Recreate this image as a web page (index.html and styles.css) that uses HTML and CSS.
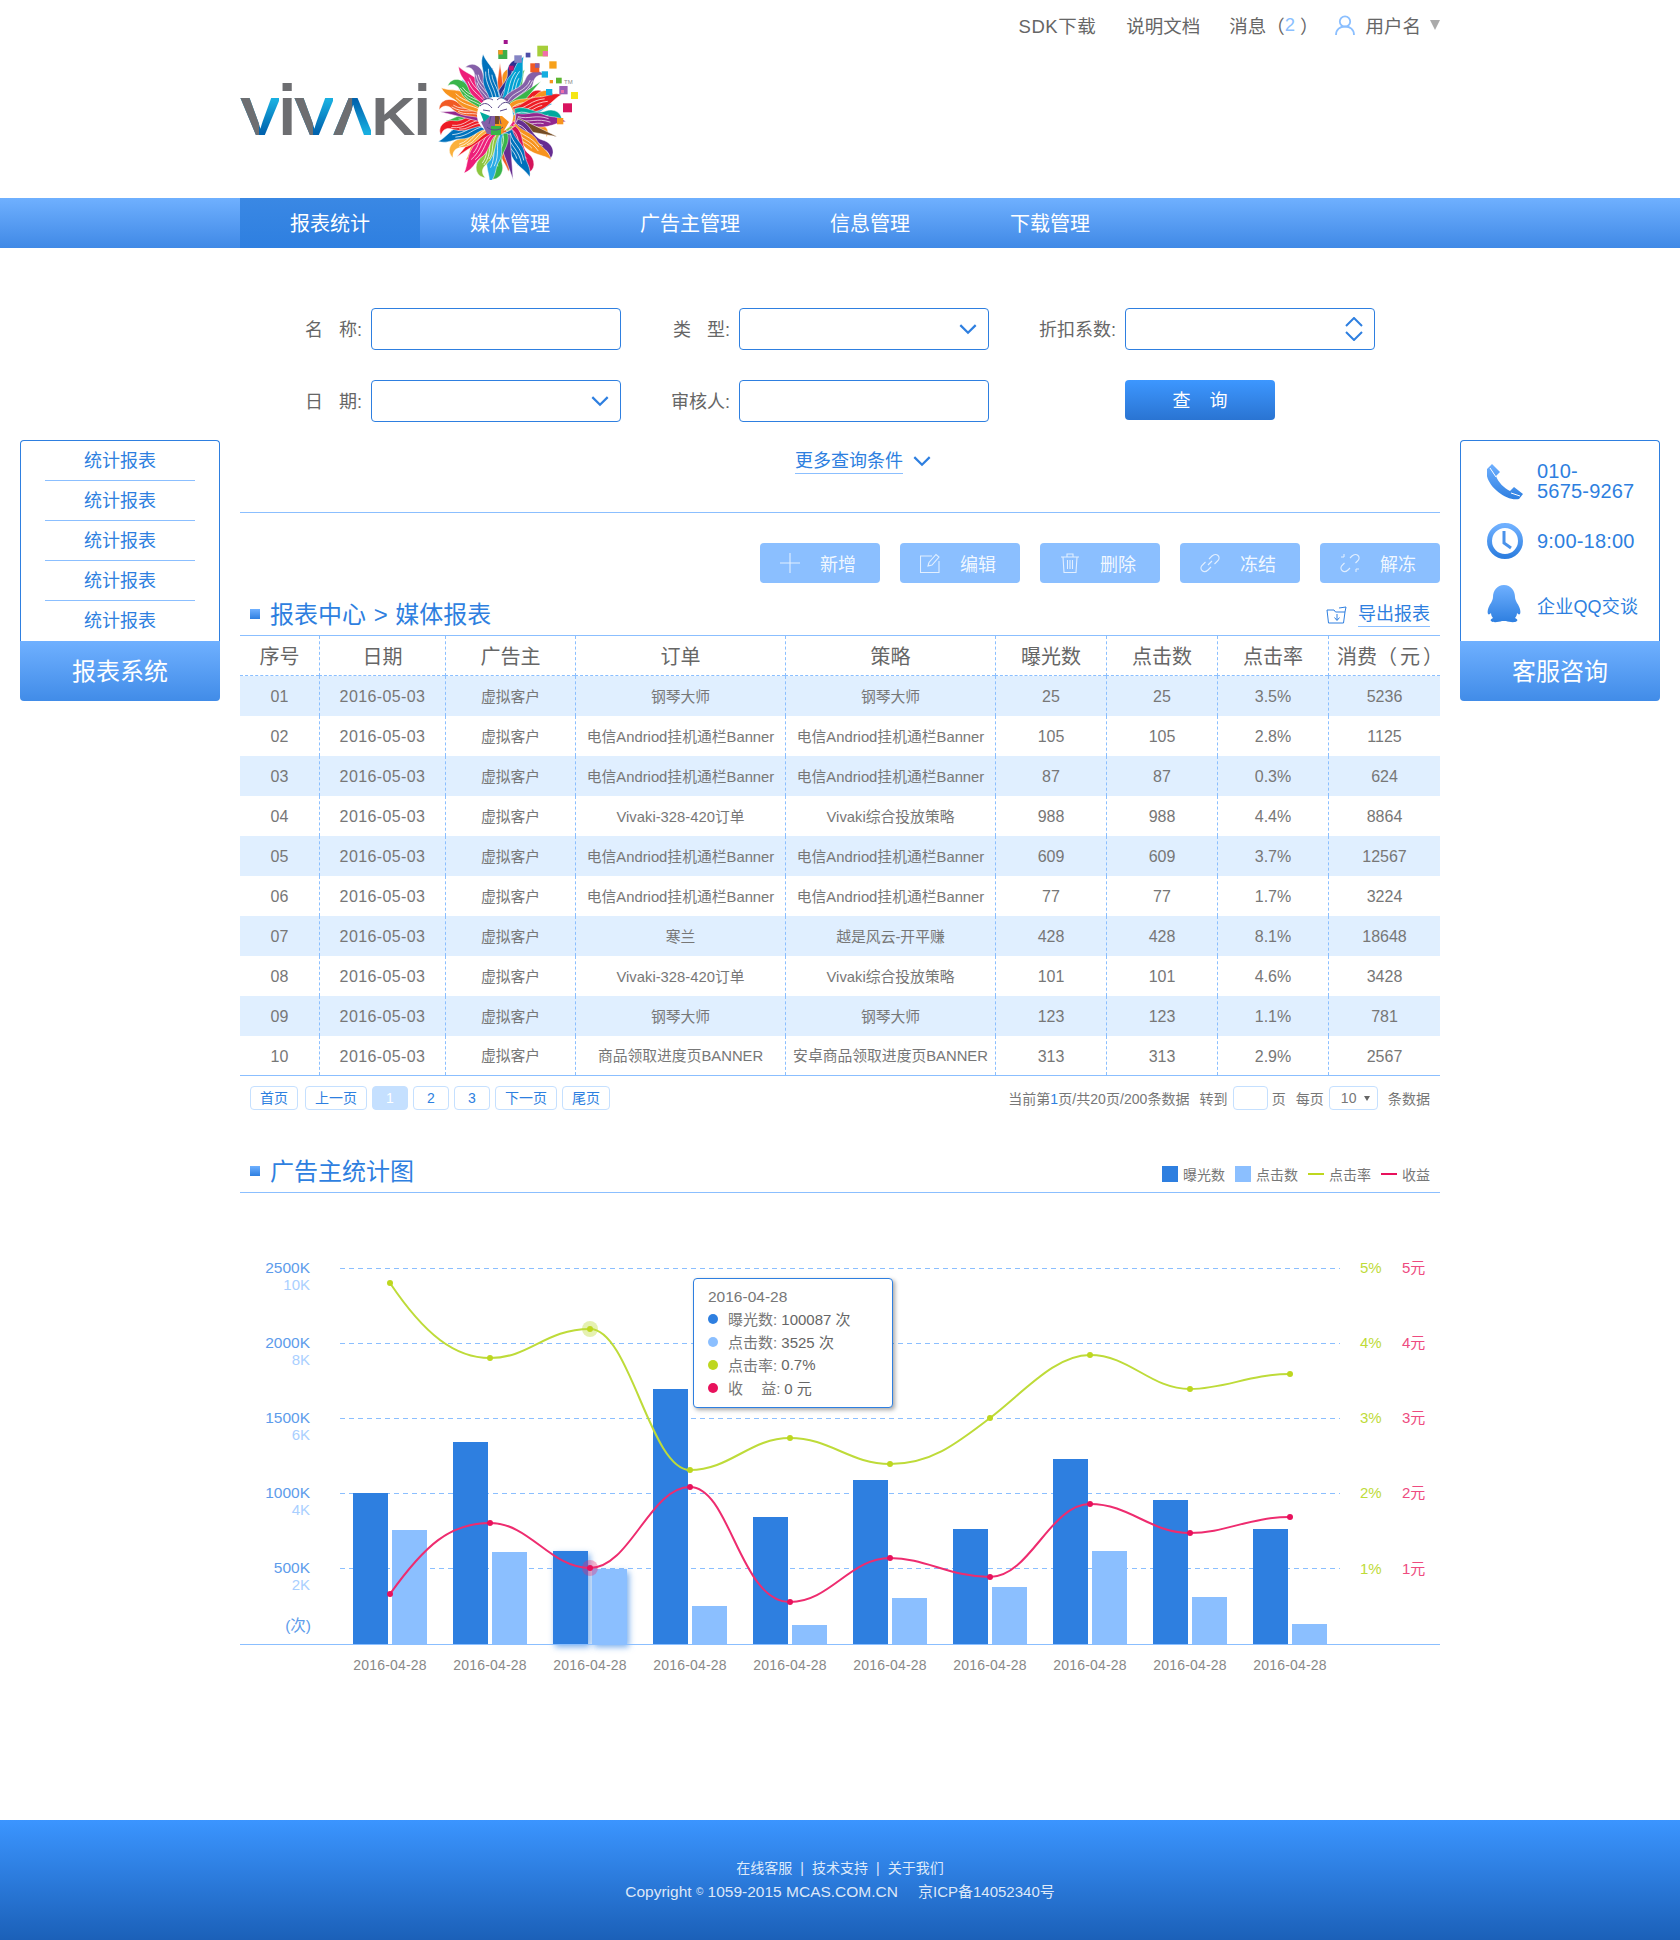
FILE: index.html
```html
<!DOCTYPE html>
<html lang="zh-CN">
<head>
<meta charset="utf-8">
<title>报表系统</title>
<link rel="stylesheet" href="styles.css">
</head>
<body>
<header class="top">
  <div class="logo">
    <div class="wordmark"><span class="lt v">V</span><span class="lt i">I</span><span class="lt v">V</span><span class="lt a">Λ</span><span class="lt">K</span><span class="lt i">I</span></div>
    <svg class="lion" viewBox="436 36 144 144" width="144" height="144">
      <defs>
        <g id="w1"><path d="M-7-14C-10-26 1-32-2-42C-4-49 1-58 10-55C5-53 3-49 6-43C11-31 4-24 6-14Z"/><path class="strand" d="M-3-16C-5-27 5-32 2-44M0-16C-1-26 7-32 4-45M3-16C2-25 8-31 6-38"/></g>
        <g id="w2"><path d="M-6-14C-4-24-11-30-7-40C-5-46-8-52-3-60C-2-54 1-50 3-44C7-32 1-24 6-14Z"/><path class="strand" d="M-3-16C-1-26-7-32-4-44M0-16C2-26-4-34-1-46M3-16C5-26 0-32 1-40"/></g>
        <path id="s1" d="M-5-14L0-50L5-14Z"/>
      </defs>
      <g transform="translate(500 118) scale(1.1)">
        <use href="#w1" fill="#f7931e" transform="rotate(6) scale(.82)"/>
        <use href="#w2" fill="#39b54a" transform="rotate(30) scale(.82)"/>
        <use href="#w1" fill="#ed1c24" transform="rotate(54) scale(.82)"/>
        <use href="#w2" fill="#29abe2" transform="rotate(78) scale(.82)"/>
        <use href="#w1" fill="#f7931e" transform="rotate(102) scale(.82)"/>
        <use href="#w2" fill="#ed1e79" transform="rotate(126) scale(.82)"/>
        <use href="#w1" fill="#8cc63f" transform="rotate(150) scale(.82)"/>
        <use href="#w2" fill="#f15a24" transform="rotate(174) scale(.82)"/>
        <use href="#w1" fill="#662d91" transform="rotate(198) scale(.82)"/>
        <use href="#w2" fill="#f7931e" transform="rotate(222) scale(.82)"/>
        <use href="#w1" fill="#0071bc" transform="rotate(246) scale(.82)"/>
        <use href="#w2" fill="#39b54a" transform="rotate(270) scale(.82)"/>
        <use href="#w1" fill="#ed1c24" transform="rotate(294) scale(.82)"/>
        <use href="#w2" fill="#00a0d2" transform="rotate(318) scale(.82)"/>
        <use href="#w1" fill="#662d91" transform="rotate(342) scale(.82)"/>
        <use href="#s1" fill="#f15a24"/>
        <use href="#w1" fill="#2e3192" transform="rotate(12)"/>
        <use href="#w2" fill="#00a0d2" transform="rotate(24)"/>
        <use href="#w1" fill="#8560a8" transform="rotate(36)"/>
        <use href="#s1" fill="#39b54a" transform="rotate(48)"/>
        <use href="#w1" fill="#f7931e" transform="rotate(60) scale(.95)"/>
        <use href="#w2" fill="#ed1c24" transform="rotate(72)"/>
        <use href="#w1" fill="#00a99d" transform="rotate(84)"/>
        <use href="#w2" fill="#92278f" transform="rotate(96)"/>
        <use href="#s1" fill="#754c24" transform="rotate(108) scale(1.1)"/>
        <use href="#w1" fill="#662d91" transform="rotate(120) scale(1.05)"/>
        <use href="#w2" fill="#f7931e" transform="rotate(132)"/>
        <use href="#w1" fill="#d4145a" transform="rotate(144)"/>
        <use href="#w2" fill="#0071bc" transform="rotate(156)"/>
        <use href="#s1" fill="#662d91" transform="rotate(168) scale(1.15)"/>
        <use href="#w1" fill="#39b54a" transform="rotate(180)"/>
        <use href="#w2" fill="#29abe2" transform="rotate(192)"/>
        <use href="#w1" fill="#8cc63f" transform="rotate(204) scale(-1 1)"/>
        <use href="#w2" fill="#ed1e79" transform="rotate(216)"/>
        <use href="#s1" fill="#ed1c24" transform="rotate(228) scale(1.05)"/>
        <use href="#w1" fill="#fbb03b" transform="rotate(240) scale(-1 1)"/>
        <use href="#w2" fill="#0071bc" transform="rotate(252)"/>
        <use href="#w1" fill="#ed1c24" transform="rotate(264) scale(-1 1)"/>
        <use href="#s1" fill="#92278f" transform="rotate(276) scale(1.1)"/>
        <use href="#w1" fill="#f15a24" transform="rotate(288) scale(-1 1)"/>
        <use href="#w2" fill="#f7931e" transform="rotate(300)"/>
        <use href="#w1" fill="#39b54a" transform="rotate(312) scale(-1 1)"/>
        <use href="#w2" fill="#ed1e79" transform="rotate(324)"/>
        <use href="#w1" fill="#8560a8" transform="rotate(336) scale(-1 1)"/>
        <use href="#w2" fill="#0071bc" transform="rotate(348)"/>
      </g>
      <circle cx="495" cy="115" r="18" fill="#fff"/>
      <path d="M481 122L490 116H495V134H487Z" fill="#8560a8"/>
      <path d="M495 116H502L509 122L502 134H495Z" fill="#f7931e"/>
      <path d="M480 112L490 116L484 122Z" fill="#00a99d"/>
      <path d="M491 126H501V135H491Z" fill="#39b54a"/>
      <path d="M495 116H499V124H495Z" fill="#754c24"/>
      <path class="face" d="M480 106C484 102 488 103 492 108M510 104C506 101 502 102 498 108M483 110L490 111M500 111L507 109M491 116L489 124M499 116L501 124M487 127C491 131 499 131 503 127M482 101C486 98 490 98 493 100M508 100C504 97 500 97 497 100"/>
      <rect x="503.7" y="40" width="4" height="4" fill="#a0148e"/>
      <rect x="498.3" y="50" width="9" height="9" fill="#3fae49"/><rect x="498.3" y="50" width="4.500" height="4.500" fill="#f7931e"/>
      <rect x="514.3" y="55.300" width="7.500" height="7.500" fill="#8585c4"/>
      <rect x="525.7" y="52.700" width="4.700" height="4.700" fill="#4d4da8"/>
      <rect x="537.3" y="45.700" width="10.700" height="10.700" fill="#a6ce39"/><rect x="542.700" y="51" width="5.300" height="5.300" fill="#f06eaa"/>
      <rect x="530.3" y="63.300" width="9" height="9" fill="#f15a24"/><rect x="535" y="63.300" width="4.500" height="4.500" fill="#8560a8"/>
      <rect x="549.3" y="61.300" width="7.300" height="7.300" fill="#f7a11a"/>
      <rect x="541.7" y="71.300" width="6.300" height="6.300" fill="#14aee0"/>
      <rect x="509" y="65.700" width="4.700" height="4.700" fill="#c4136d"/>
      <rect x="549.7" y="80" width="3.300" height="3.300" fill="#f7931e"/>
      <rect x="556" y="77.700" width="5.700" height="5.700" fill="#5cb531"/>
      <text class="tm" x="564" y="83.500">TM</text>
      <rect x="546" y="89" width="6.300" height="6.300" fill="#14aee0"/>
      <rect x="559.3" y="86" width="8.300" height="8.300" fill="#9b5fb5"/><rect x="561" y="90" width="3" height="3" fill="#f06eaa"/>
      <rect x="571" y="92" width="7" height="7" fill="#f5e615"/>
      <rect x="563" y="103.300" width="9" height="9" fill="#d9145f"/>
      <rect x="557" y="118" width="6.300" height="6.300" fill="#f7941e"/>
    </svg>
  </div>
  <nav class="links">
    <a class="sdk">SDK下载</a>
    <a>说明文档</a>
    <a class="msg">消息（<b>2</b>）</a>
    <a class="user">
      <svg viewBox="0 0 20 20" width="20" height="20"><circle cx="10" cy="6.500" r="5.200"/><path d="M1 20C1 14.500 5 11.500 10 11.500S19 14.500 19 20"/></svg>
      用户名<i class="caret"></i>
    </a>
  </nav>
</header>

<nav class="mainnav">
  <div class="mainnav-in">
    <a class="active">报表统计</a><a>媒体管理</a><a>广告主管理</a><a>信息管理</a><a>下载管理</a>
  </div>
</nav>

<div class="layout">
  <aside class="side side-l">
    <div class="panel-body">
      <ul class="menu">
        <li>统计报表</li><li>统计报表</li><li>统计报表</li><li>统计报表</li><li>统计报表</li>
      </ul>
    </div>
    <div class="panel-head">报表系统</div>
  </aside>

  <main class="main">
    <form class="query">
      <label>名 称:</label><div class="field"></div>
      <label>类 型:</label><div class="field"><svg class="chev" viewBox="0 0 16 10" width="18" height="11"><path d="M1 1L8 8L15 1"/></svg></div>
      <label>折扣系数:</label><div class="field"><svg class="updown" viewBox="0 0 18 24" width="18" height="24"><path d="M1 9L9 1L17 9M1 15L9 23L17 15"/></svg></div>
      <label>日 期:</label><div class="field"><svg class="chev" viewBox="0 0 16 10" width="18" height="11"><path d="M1 1L8 8L15 1"/></svg></div>
      <label>审核人:</label><div class="field"></div>
      <span></span><button type="button" class="search">查 询</button>
    </form>
    <div class="more"><a>更多查询条件</a><svg class="chev" viewBox="0 0 16 10" width="18" height="11"><path d="M1 1L8 8L15 1"/></svg></div>
    <div class="rule"></div>

    <div class="tools">
      <button type="button"><svg viewBox="0 0 20 20" width="20" height="20"><path d="M10 0V20M0 10H20"/></svg>新增</button>
      <button type="button"><svg viewBox="0 0 20 20" width="20" height="20"><path d="M12 3H.5V19.500H19V8M8 13L9 9.500L16 1.500L19 4L12 12Z"/></svg>编辑</button>
      <button type="button"><svg viewBox="0 0 20 20" width="20" height="20"><path d="M1 4H19M7 4V1H13V4M3 4L4 19.500H16L17 4M7.500 7V16M10 7V16M12.500 7V16"/></svg>删除</button>
      <button type="button"><svg viewBox="0 0 20 20" width="20" height="20"><path d="M8 12L12 8M9 6L12 3C14 1 16.500 1 18 2.500S19.500 6.500 17.500 8L14.500 11M11 14L8 17C6 19 3.500 19 2 17.500S.5 13.500 2.500 12L5.500 9"/></svg>冻结</button>
      <button type="button"><svg viewBox="0 0 20 20" width="20" height="20"><path d="M10 5L12 3C14 1 16.500 1 18 2.500S19.500 6.500 17.500 8L15.500 10M10 15L8 17C6 19 3.500 19 2 17.500S.5 13.500 2.500 12L4.500 10M4 1V4M1 4H4M16 16V19M16 16H19"/></svg>解冻</button>
    </div>

    <div class="sec-head report-head">
      <i class="sq"></i><h2>报表中心 &gt; 媒体报表</h2>
      <a class="export"><svg viewBox="0 0 22 18" width="22" height="18"><path d="M1 4H8L9.500 6H19L17.500 17H2.500ZM13 2L20 1L19 6M11 8V14M8.500 11.500L11 14.500L13.500 11.500"/></svg><span>导出报表</span></a>
    </div>

    <table class="grid">
      <colgroup><col class="c1"><col class="c2"><col class="c3"><col class="c4"><col class="c4"><col class="c5"><col class="c5"><col class="c5"><col class="c6"></colgroup>
      <thead><tr><th>序号</th><th>日期</th><th>广告主</th><th>订单</th><th>策略</th><th>曝光数</th><th>点击数</th><th>点击率</th><th>消费（ 元 ）</th></tr></thead>
      <tbody>
        <tr><td class="n">01</td><td class="n">2016-05-03</td><td>虚拟客户</td><td>钢琴大师</td><td>钢琴大师</td><td class="n">25</td><td class="n">25</td><td class="n">3.5%</td><td class="n">5236</td></tr>
        <tr><td class="n">02</td><td class="n">2016-05-03</td><td>虚拟客户</td><td>电信Andriod挂机通栏Banner</td><td>电信Andriod挂机通栏Banner</td><td class="n">105</td><td class="n">105</td><td class="n">2.8%</td><td class="n">1125</td></tr>
        <tr><td class="n">03</td><td class="n">2016-05-03</td><td>虚拟客户</td><td>电信Andriod挂机通栏Banner</td><td>电信Andriod挂机通栏Banner</td><td class="n">87</td><td class="n">87</td><td class="n">0.3%</td><td class="n">624</td></tr>
        <tr><td class="n">04</td><td class="n">2016-05-03</td><td>虚拟客户</td><td>Vivaki-328-420订单</td><td>Vivaki综合投放策略</td><td class="n">988</td><td class="n">988</td><td class="n">4.4%</td><td class="n">8864</td></tr>
        <tr><td class="n">05</td><td class="n">2016-05-03</td><td>虚拟客户</td><td>电信Andriod挂机通栏Banner</td><td>电信Andriod挂机通栏Banner</td><td class="n">609</td><td class="n">609</td><td class="n">3.7%</td><td class="n">12567</td></tr>
        <tr><td class="n">06</td><td class="n">2016-05-03</td><td>虚拟客户</td><td>电信Andriod挂机通栏Banner</td><td>电信Andriod挂机通栏Banner</td><td class="n">77</td><td class="n">77</td><td class="n">1.7%</td><td class="n">3224</td></tr>
        <tr><td class="n">07</td><td class="n">2016-05-03</td><td>虚拟客户</td><td>寒兰</td><td>越是风云-开平赚</td><td class="n">428</td><td class="n">428</td><td class="n">8.1%</td><td class="n">18648</td></tr>
        <tr><td class="n">08</td><td class="n">2016-05-03</td><td>虚拟客户</td><td>Vivaki-328-420订单</td><td>Vivaki综合投放策略</td><td class="n">101</td><td class="n">101</td><td class="n">4.6%</td><td class="n">3428</td></tr>
        <tr><td class="n">09</td><td class="n">2016-05-03</td><td>虚拟客户</td><td>钢琴大师</td><td>钢琴大师</td><td class="n">123</td><td class="n">123</td><td class="n">1.1%</td><td class="n">781</td></tr>
        <tr><td class="n">10</td><td class="n">2016-05-03</td><td>虚拟客户</td><td>商品领取进度页BANNER</td><td>安卓商品领取进度页BANNER</td><td class="n">313</td><td class="n">313</td><td class="n">2.9%</td><td class="n">2567</td></tr>
      </tbody>
    </table>

    <div class="pager">
      <div class="pages">
        <a>首页</a><a>上一页</a><a class="p on">1</a><a class="p">2</a><a class="p">3</a><a>下一页</a><a>尾页</a>
      </div>
      <div class="pinfo">
        <span>当前第<em>1</em>页/共20页/200条数据</span>
        <span class="to">转到</span><span class="box jump"></span><span class="s4">页</span>
        <span class="to2">每页</span><span class="box size">10<i></i></span><span class="to2">条数据</span>
      </div>
    </div>

    <div class="sec-head chart-head">
      <i class="sq"></i><h2>广告主统计图</h2>
      <div class="legend">
        <i class="lg-sq dark"></i><span>曝光数</span>
        <i class="lg-sq light"></i><span>点击数</span>
        <i class="lg-ln green"></i><span>点击率</span>
        <i class="lg-ln pink"></i><span>收益</span>
      </div>
    </div>

    <div class="chart">
      <svg class="plot" viewBox="240 1193 1200 627" width="1200" height="627">
        <g class="gridl">
          <path d="M340 1268.500H1340M340 1343.500H1340M340 1418.500H1340M340 1493.500H1340M340 1568.500H1340"/>
        </g>
        <g class="b-d">
          <rect x="353" y="1493" width="35" height="151"/>
          <rect x="453" y="1442" width="35" height="202"/>
          <rect x="653" y="1389" width="35" height="255"/>
          <rect x="753" y="1517" width="35" height="127"/>
          <rect x="853" y="1480" width="35" height="164"/>
          <rect x="953" y="1529" width="35" height="115"/>
          <rect x="1053" y="1459" width="35" height="185"/>
          <rect x="1153" y="1500" width="35" height="144"/>
          <rect x="1253" y="1529" width="35" height="115"/>
        </g>
        <g class="b-l">
          <rect x="392" y="1530" width="35" height="114"/>
          <rect x="492" y="1552" width="35" height="92"/>
          <rect x="692" y="1606" width="35" height="38"/>
          <rect x="792" y="1625" width="35" height="19"/>
          <rect x="892" y="1598" width="35" height="46"/>
          <rect x="992" y="1587" width="35" height="57"/>
          <rect x="1092" y="1551" width="35" height="93"/>
          <rect x="1192" y="1597" width="35" height="47"/>
          <rect x="1292" y="1624" width="35" height="20"/>
        </g>
        <g class="hover">
          <rect class="hd" x="553" y="1551" width="35" height="93"/>
          <rect class="hl" x="592" y="1569" width="35" height="75"/>
        </g>
        <path class="axis" d="M240 1644.500H1440"/>
        <path class="ln-g" d="M390 1283C425 1335 455 1358 490 1358C530 1358 545 1329 590 1329C630 1329 650 1470 690 1470C730 1470 750 1438 790 1438C830 1438 850 1464 890 1464C930 1464 955 1445 990 1418C1025 1391 1055 1355 1090 1355C1130 1355 1150 1389 1190 1389C1225 1389 1250 1374 1290 1374"/>
        <path class="ln-p" d="M390 1594C425 1545 450 1523 490 1523C530 1523 550 1568 590 1568C630 1568 650 1487 690 1487C730 1487 740 1602 790 1602C830 1602 850 1558 890 1558C925 1558 950 1577 990 1577C1030 1577 1050 1504 1090 1504C1130 1504 1150 1533 1190 1533C1225 1533 1250 1517 1290 1517"/>
        <circle class="halo-g" cx="590" cy="1329" r="8"/>
        <circle class="halo-p" cx="590" cy="1568" r="8"/>
        <g class="dots-g">
          <circle cx="390" cy="1283" r="3"/><circle cx="490" cy="1358" r="3"/><circle cx="590" cy="1329" r="3"/><circle cx="690" cy="1470" r="3"/><circle cx="790" cy="1438" r="3"/><circle cx="890" cy="1464" r="3"/><circle cx="990" cy="1418" r="3"/><circle cx="1090" cy="1355" r="3"/><circle cx="1190" cy="1389" r="3"/><circle cx="1290" cy="1374" r="3"/>
        </g>
        <g class="dots-p">
          <circle cx="390" cy="1594" r="3"/><circle cx="490" cy="1523" r="3"/><circle cx="590" cy="1568" r="3"/><circle cx="690" cy="1487" r="3"/><circle cx="790" cy="1602" r="3"/><circle cx="890" cy="1558" r="3"/><circle cx="990" cy="1577" r="3"/><circle cx="1090" cy="1504" r="3"/><circle cx="1190" cy="1533" r="3"/><circle cx="1290" cy="1517" r="3"/>
        </g>
        <g class="ya">
          <text x="310" y="1273">2500K</text><text x="310" y="1348">2000K</text><text x="310" y="1423">1500K</text><text x="310" y="1498">1000K</text><text x="310" y="1573">500K</text>
          <text x="311" y="1631">(次)</text>
        </g>
        <g class="yb">
          <text x="310" y="1290">10K</text><text x="310" y="1365">8K</text><text x="310" y="1440">6K</text><text x="310" y="1515">4K</text><text x="310" y="1590">2K</text>
        </g>
        <g class="yc">
          <text x="1360" y="1273">5%</text><text x="1360" y="1348">4%</text><text x="1360" y="1423">3%</text><text x="1360" y="1498">2%</text><text x="1360" y="1574">1%</text>
        </g>
        <g class="yd">
          <text x="1402" y="1273">5元</text><text x="1402" y="1348">4元</text><text x="1402" y="1423">3元</text><text x="1402" y="1498">2元</text><text x="1402" y="1574">1元</text>
        </g>
        <g class="xa">
          <text x="390" y="1670">2016-04-28</text><text x="490" y="1670">2016-04-28</text><text x="590" y="1670">2016-04-28</text><text x="690" y="1670">2016-04-28</text><text x="790" y="1670">2016-04-28</text><text x="890" y="1670">2016-04-28</text><text x="990" y="1670">2016-04-28</text><text x="1090" y="1670">2016-04-28</text><text x="1190" y="1670">2016-04-28</text><text x="1290" y="1670">2016-04-28</text>
        </g>
      </svg>
      <div class="tip">
        <div class="tip-date">2016-04-28</div>
        <div class="tip-row"><i class="d1"></i>曝光数: <b>100087 次</b></div>
        <div class="tip-row"><i class="d2"></i>点击数: <b>3525 次</b></div>
        <div class="tip-row"><i class="d3"></i>点击率: <b>0.7%</b></div>
        <div class="tip-row"><i class="d4"></i><span class="sp">收 益:</span><b>0 元</b></div>
      </div>
    </div>
  </main>

  <aside class="side side-r">
    <div class="panel-body contact">
      <div class="c-row r1">
        <svg viewBox="0 0 36 37" width="36" height="37">
          <defs><linearGradient id="blueG" x1="0" y1="0" x2="0" y2="1"><stop offset="0" stop-color="#6fb0ff"/><stop offset="1" stop-color="#2e7fe0"/></linearGradient></defs>
          <path class="grad" d="M5 1L13 9L9 13C11 19 17 25 23 28L27 24L36 31L32 36C18 39-4 20 0 6Z"/>
          <path class="cut" d="M3 5L9 14M24 30L33 33"/>
        </svg>
        <span>010-<br>5675-9267</span>
      </div>
      <div class="c-row r2">
        <svg viewBox="0 0 36 36" width="36" height="36"><circle class="ring" cx="18" cy="18" r="15.500"/><path class="hand" d="M17 8V20L24 25"/></svg>
        <span>9:00-18:00</span>
      </div>
      <div class="c-row r3">
        <svg viewBox="0 0 34 38" width="34" height="38"><path class="grad" d="M17 0C24 0 28 6 28 12C28 14 29 16 30 18C33 22 34 27 33 29C32 30 31 29 30 28C30 30 29 32 28 33C30 34 31 35 30 36C28 38 22 37 19 36H15C12 37 6 38 4 36C3 35 4 34 6 33C5 32 4 30 4 28C3 29 2 30 1 29C0 27 1 22 4 18C5 16 6 14 6 12C6 6 10 0 17 0Z"/></svg>
        <a>企业QQ交谈</a>
      </div>
    </div>
    <div class="panel-head">客服咨询</div>
  </aside>
</div>

<footer class="foot">
  <div class="foot-links">在线客服<i>|</i>技术支持<i>|</i>关于我们</div>
  <div class="foot-copy"><span>Copyright <small>©</small> 1059-2015 MCAS.COM.CN</span><span class="icp">京ICP备14052340号</span></div>
</footer>
</body>
</html>
```

FILE: styles.css
```css
* { box-sizing: border-box; }
html, body { margin: 0; padding: 0; }
body {
  width: 1680px;
  background: #fff;
  color: #666;
  font-family: "Liberation Sans", "Noto Sans CJK SC", sans-serif;
}
a { text-decoration: none; }
ul { list-style: none; margin: 0; padding: 0; }
h2 { margin: 0; font-weight: 400; }

/* header */
.top { display: flex; justify-content: space-between; align-items: flex-start; width: 1200px; height: 198px; margin: 0 auto; }
.logo { display: flex; align-items: flex-start; margin-top: 36px; }
.wordmark { margin-top: 54px; width: 196px; height: 53px; font: 700 53px/53px "Liberation Sans", sans-serif; color: #6d6e71; letter-spacing: -1.600px; transform: scaleX(1.15); transform-origin: left top; white-space: nowrap; }
.lt { display: inline-block; position: relative; }
.lt.i::before { content: ""; position: absolute; left: 3.500px; top: -7px; width: 7.500px; height: 8px; background: #6d6e71; }
.lt.v, .lt.a { color: transparent; -webkit-background-clip: text; background-clip: text; }
.lt.v { background-image: linear-gradient(90deg, #6d6e71 48%, transparent 48%), linear-gradient(180deg, #18aee0 20%, #0063ae 80%); }
.lt.a { background-image: linear-gradient(90deg, #6d6e71 50%, transparent 50%), linear-gradient(180deg, #0063ae 20%, #18aee0 80%); }
.lion { display: block; flex: none; }
.strand { fill: none; stroke: #fff; stroke-width: .6; }
.lion use { stroke: #fff; stroke-width: .4; }
.face { fill: none; stroke: #5b4a8a; stroke-width: 1; }
.tm { font-size: 6px; fill: #888; }
.links { display: flex; align-items: center; gap: 30px; height: 49px; font-size: 18.500px; color: #666; }
.links a { display: flex; align-items: center; white-space: nowrap; }
.sdk { letter-spacing: .5px; }
.msg b { font-weight: 400; color: #8bbfff; margin: 0 5px 0 0; }
.msg { margin-left: -1px; margin-right: -13px; }
.user svg { margin-right: 10px; fill: none; stroke: #8bbfff; stroke-width: 1.800; }
.caret { width: 0; height: 0; margin: 1px 0 0 9px; border: 5.500px solid transparent; border-top: 10px solid #aaa; border-bottom: 0; }

/* main nav */
.mainnav { height: 50px; background: linear-gradient(#6fb0ff, #4089e6); }
.mainnav-in { display: flex; width: 1200px; margin: 0 auto; }
.mainnav-in a { width: 180px; height: 50px; line-height: 52px; text-align: center; color: #fff; font-size: 20px; }
.mainnav-in a.active { background: linear-gradient(#3a88e4, #2e7fe0); }

/* layout */
.layout { display: grid; grid-template-columns: 240px 1200px 240px; }
.side { padding: 192px 20px 0; }
.panel-body { height: 201px; border: 1px solid #2e7fe0; border-bottom: 0; border-radius: 4px 4px 0 0; }
.panel-head { height: 60px; line-height: 61px; text-align: center; font-size: 24px; color: #fff; background: linear-gradient(#6fb0ff, #418ce8); border-radius: 0 0 4px 4px; }
.menu { margin: 0 24px; }
.menu li { height: 40px; line-height: 41px; text-align: center; font-size: 18px; color: #2e7fe0; border-bottom: 1px solid #8bbfff; }
.menu li:last-child { border-bottom: 0; }
.contact { padding-left: 26px; color: #2e7fe0; font-size: 20px; letter-spacing: .2px; }
.c-row { display: flex; align-items: center; gap: 14px; line-height: 20px; }
.c-row.r1 { margin-top: 20px; }
.c-row.r2 { margin-top: 22px; }
.c-row.r3 { margin-top: 26px; gap: 16px; }
.c-row a { margin-top: 6px; color: #2e7fe0; font-size: 18px; }
.grad { fill: url(#blueG); }
.cut { fill: none; stroke: #fff; stroke-width: 1; }
.ring { fill: none; stroke: url(#blueG); stroke-width: 5; }
.hand { fill: none; stroke: #4a92ea; stroke-width: 3; }

/* query */
.query { display: grid; grid-template-columns: 131px 250px 118px 250px 136px 250px; grid-auto-rows: 42px; row-gap: 30px; padding-top: 60px; }
.query label { align-self: center; text-align: right; padding: 0 9px 2px 0; font-size: 18px; color: #666; word-spacing: 11px; }
.field { display: flex; align-items: center; justify-content: flex-end; padding-right: 11px; border: 1px solid #2e7fe0; border-radius: 4px; }
.chev, .updown { fill: none; stroke: #2e7fe0; stroke-width: 2; }
.search { width: 150px; height: 40px; padding: 0 0 2px; border: 0; border-radius: 4px; background: linear-gradient(#3d97ff, #2a74d2); color: #fff; font: 18px "Liberation Sans", "Noto Sans CJK SC", sans-serif; word-spacing: 14px; }
.more { display: flex; align-items: center; justify-content: center; gap: 10px; height: 24px; margin-top: 27px; padding-left: 46px; }
.more a { font-size: 18px; line-height: 24px; color: #2e7fe0; border-bottom: 1px solid #8bbfff; }
.rule { height: 1px; margin-top: 39px; background: #8bbfff; box-shadow: 0 6px 10px -4px rgba(139,191,255,.25); }

/* tools */
.tools { display: flex; justify-content: flex-end; gap: 20px; margin-top: 30px; }
.tools button { display: flex; align-items: center; gap: 20px; width: 120px; height: 40px; padding: 0 0 0 20px; border: 0; border-radius: 4px; background: #8bbfff; color: rgba(255,255,255,.9); font: 18px "Liberation Sans", "Noto Sans CJK SC", sans-serif; }
.tools svg { fill: none; stroke: rgba(255,255,255,.75); stroke-width: 1.100; }

/* section head */
.sec-head { display: flex; align-items: center; height: 53px; padding: 10px 10px 0; border-bottom: 1px solid #8bbfff; }
.sq { width: 10px; height: 10px; margin-right: 10px; background: linear-gradient(#6fb0ff, #2e7fe0); }
.sec-head h2 { font-size: 24px; color: #2e7fe0; }
.report-head { padding-top: 6px; }
.report-head .sq { margin-top: 4px; }
.report-head h2 { word-spacing: 1px; }
.export { display: flex; align-items: center; gap: 10px; margin: 6px 0 0 auto; color: #2e7fe0; font-size: 18px; }
.export span { border-bottom: 1px solid #8bbfff; line-height: 23px; }
.export svg { fill: none; stroke: #2e7fe0; stroke-width: 1; }

/* table */
.grid { width: 1200px; table-layout: fixed; border-collapse: separate; border-spacing: 0; border-bottom: 1px solid #8bbfff; text-align: center; }
.c1 { width: 79px; } .c2 { width: 126px; } .c3 { width: 130px; } .c4 { width: 210px; } .c5 { width: 111px; } .c6 { width: 112px; }
.grid th { height: 40px; padding: 0; font-size: 20px; font-weight: 400; color: #666; border-bottom: 1px dashed #8bbfff; border-left: 1px dashed #8bbfff; }
.grid th:last-child { padding-left: 8px; word-spacing: -2.500px; white-space: nowrap; }
.grid td { height: 40px; padding: 0 0 2px; font-size: 14.800px; color: #777; border-left: 1px dashed #8bbfff; white-space: nowrap; }
.grid th:first-child, .grid td:first-child { border-left: 0; }
.grid td.n { padding: 2px 0 0; font-size: 16px; }
.grid td:nth-child(2) { letter-spacing: .4px; }
.grid tbody tr:nth-child(odd) { background: #e0efff; }
.grid tbody tr:last-child td { height: 39px; }

/* pager */
.pager { display: flex; justify-content: space-between; align-items: center; height: 24px; margin-top: 10px; padding: 0 10px; font-size: 14px; }
.pages { display: flex; gap: 5px; }
.pages a { height: 24px; line-height: 22px; padding: 0 9px; border: 1px solid #c5e0ff; border-radius: 4px; color: #2e7fe0; }
.pages a:first-child { margin-right: 2px; }
.pages a.p { width: 36px; padding: 0; text-align: center; }
.pages a.on { background: #c5e0ff; color: #fff; }
.pinfo { display: flex; align-items: center; color: #777; letter-spacing: .05px; }
.pinfo em { font-style: normal; color: #2e7fe0; }
.to { margin-left: 10px; margin-right: 5px; }
.box { height: 24px; border: 1px solid #c5e0ff; border-radius: 4px; }
.jump { width: 35px; }
.s4 { margin-left: 4px; }
.to2 { margin-left: 10px; margin-right: 5px; }
.to2:last-child { margin-right: 0; }
.size { display: flex; align-items: center; justify-content: space-between; width: 49px; padding: 0 7px 0 11px; line-height: 22px; }
.size i { width: 0; height: 0; border: 3px solid transparent; border-top: 5px solid #666; border-bottom: 0; }

/* chart */
.chart-head { height: 43px; margin-top: 40px; padding: 0 10px 3px; }
.chart-head .sq { margin-top: 2px; }
.legend { display: flex; align-items: center; margin: 8px 0 0 auto; font-size: 14px; color: #777; }
.legend span { margin-left: 5px; margin-right: 10px; }
.legend span:last-child { margin-right: 0; }
.lg-sq { width: 16px; height: 16px; }
.lg-sq.dark { background: #2e7fe0; }
.lg-sq.light { background: #8bbfff; }
.lg-ln { width: 16px; height: 2px; }
.lg-ln.green { background: #bed71f; }
.lg-ln.pink { background: #e8115c; }
.chart { position: relative; height: 627px; }
.plot { display: block; }
.gridl path { fill: none; stroke: #8bbfff; stroke-dasharray: 5 4; }
.b-d rect, .hd { fill: #2e7fe0; }
.b-l rect, .hl { fill: #8bbfff; }
.hover rect { filter: drop-shadow(2px 3px 3px rgba(46,127,224,.65)); }
.axis { stroke: #8bbfff; fill: none; }
.ln-g { fill: none; stroke: #bedb39; stroke-width: 2; }
.ln-p { fill: none; stroke: #ee2c6f; stroke-width: 2; }
.halo-g { fill: rgba(190,219,57,.4); }
.halo-p { fill: rgba(238,44,111,.35); }
.dots-g circle { fill: #bed71f; }
.dots-p circle { fill: #e8115c; }
.plot text { font-size: 15px; }
.plot .ya text { text-anchor: end; fill: #5d9ceb; font-size: 15.500px; }
.yb text { text-anchor: end; fill: #a9cfff; }
.yc text { fill: #bedb39; }
.yd text { fill: #ee4b80; }
.plot .xa text { text-anchor: middle; font-size: 14px; fill: #888; letter-spacing: .2px; }

.tip { position: absolute; left: 453px; top: 85px; width: 200px; height: 130px; padding: 7px 0 0 14px; background: #fff; border: 1px solid #2e7fe0; border-radius: 4px; box-shadow: 2px 2px 4px rgba(0,0,0,.35); font-size: 15px; color: #777; }
.tip-date { height: 21px; line-height: 22px; font-size: 15.500px; }
.tip-row { display: flex; align-items: center; height: 23px; white-space: pre; }
.tip-row i { width: 10px; height: 10px; margin-right: 10px; border-radius: 50%; }
.tip-row b { font-weight: 400; font-size: 15px; color: #666; }
.tip-row .sp { margin-right: 4px; word-spacing: 14px; }
.d1 { background: #2e7fe0; } .d2 { background: #8bbfff; } .d3 { background: #bed71f; } .d4 { background: #e8115c; }

/* footer */
.foot { height: 120px; padding-top: 36px; text-align: center; background: linear-gradient(#3b95ff, #1b60b8); color: rgba(255,255,255,.85); }
.foot-links { height: 24px; line-height: 24px; font-size: 14px; }
.foot-links i { margin: 0 8px; font-style: normal; }
.foot-copy { display: flex; justify-content: center; gap: 20px; height: 24px; line-height: 24px; font-size: 15.500px; }
.foot-copy .icp { font-size: 15px; }
.foot-copy small { font-size: 10px; vertical-align: 2px; }
```
